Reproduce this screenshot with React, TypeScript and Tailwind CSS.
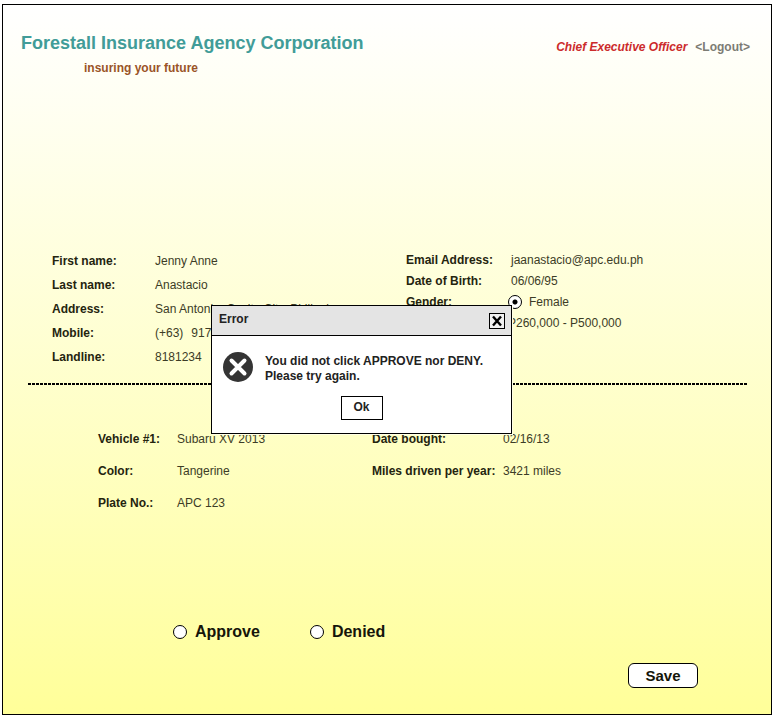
import { useState, type ReactNode } from "react";

function Field({
  label,
  children,
  row,
  labelWidth,
}: {
  label: string;
  children: ReactNode;
  row: string;
  labelWidth: string;
}) {
  return (
    <div className={`flex items-center ${row}`}>
      <dt className={`shrink-0 whitespace-nowrap font-bold text-[#24240f] ${labelWidth}`}>{label}</dt>
      <dd className="whitespace-nowrap text-[#3c3c26]">{children}</dd>
    </div>
  );
}

function Radio({
  id,
  name,
  checked,
  onChange,
}: {
  id: string;
  name: string;
  checked: boolean;
  onChange: () => void;
}) {
  return (
    <input
      id={id}
      type="radio"
      name={name}
      checked={checked}
      onChange={onChange}
      className="size-3.5 shrink-0 appearance-none rounded-full border border-black bg-white checked:bg-[radial-gradient(circle,#000_2px,#fff_3px)]"
    />
  );
}

function ErrorDialog({ onClose }: { onClose: () => void }) {
  return (
    <div
      role="alertdialog"
      aria-labelledby="dialog-title"
      aria-describedby="dialog-message"
      className="absolute top-[300px] left-[208px] w-[301px] border border-black bg-white font-bold text-[#222] shadow-[1px_1px_0_#ffffe6]"
    >
      <div className="flex h-[30px] items-center justify-between border-b border-black bg-[#e4e4e4] pr-1.5 pl-[7px]">
        <h2 id="dialog-title" className="pb-1">
          Error
        </h2>
        <button
          type="button"
          aria-label="Close"
          onClick={onClose}
          className="flex size-4 items-center justify-center border border-black bg-[#f1f1f1]"
        >
          <svg viewBox="0 0 12 12" className="size-3" fill="none" stroke="#000" strokeWidth="2.4">
            <path d="M2 1.5 10 10.5M10 1.5 2 10.5" />
          </svg>
        </button>
      </div>
      <div className="flex gap-[11px] px-[10px] pt-[15px]">
        <svg viewBox="0 0 32 32" className="size-8 shrink-0">
          <circle cx="16" cy="16" r="15" fill="#343434" />
          <path
            d="M9.5 9.5 22.5 22.5M22.5 9.5 9.5 22.5"
            stroke="#fff"
            strokeWidth="4"
            strokeLinecap="round"
          />
        </svg>
        <p id="dialog-message" className="whitespace-nowrap pt-[3px] leading-[15px]">
          You did not click APPROVE nor DENY.
          <br />
          Please try again.
        </p>
      </div>
      <div className="flex justify-center pt-3 pb-[13px]">
        <button type="button" onClick={onClose} className="h-6 w-[42px] border border-black bg-white pb-0.5">
          Ok
        </button>
      </div>
    </div>
  );
}

export default function App() {
  const [open, setOpen] = useState(true);
  const [decision, setDecision] = useState("");
  const personRow = "h-6";
  const contactRow = "h-[21px]";
  const vehicleRow = "h-8";

  return (
    <div className="bg-white pt-1 pr-[6px] pb-[10px] pl-0.5 font-['Liberation_Sans',Arial,sans-serif] text-[12px] leading-4">
      <main className="relative border border-black bg-linear-to-b from-white to-[#ffff99] pb-[26px]">
        <header className="flex items-start justify-between pt-[27px] pr-[21px] pl-[18px]">
          <div>
            <h1 className="text-[18px] leading-[22px] font-bold text-[#419c98]">
              Forestall Insurance Agency Corporation
            </h1>
            <p className="pt-1.5 pl-[63px] font-bold text-[#9a5427]">insuring your future</p>
          </div>
          <div className="flex gap-2 pt-[7px] font-bold">
            <span className="text-[#cc2b2b] italic">Chief Executive Officer</span>
            <a href="#logout" className="text-[#7c7c74]">
              &lt;Logout&gt;
            </a>
          </div>
        </header>

        <section className="grid grid-cols-2 pt-[173px] pr-[11px] pl-[49px]">
          <dl>
            <Field label="First name:" row={personRow} labelWidth="w-[103px]">Jenny Anne</Field>
            <Field label="Last name:" row={personRow} labelWidth="w-[103px]">Anastacio</Field>
            <Field label="Address:" row={personRow} labelWidth="w-[103px]">
              San Antonio, Cavite City, Philippines
            </Field>
            <Field label="Mobile:" row={personRow} labelWidth="w-[103px]">
              <span className="pr-2">(+63)</span>917
            </Field>
            <Field label="Landline:" row={personRow} labelWidth="w-[103px]">8181234</Field>
          </dl>
          <dl>
            <Field label="Email Address:" row={contactRow} labelWidth="w-[105px]">
              jaanastacio@apc.edu.ph
            </Field>
            <Field label="Date of Birth:" row={contactRow} labelWidth="w-[105px]">06/06/95</Field>
            <Field label="Gender:" row={contactRow} labelWidth="w-[102px]">
              <span className="flex items-center gap-[7px]">
                <Radio id="female" name="gender" checked onChange={() => {}} />
                <label htmlFor="female">Female</label>
              </span>
            </Field>
            <Field label="Income:" row={contactRow} labelWidth="w-[102px]">
              P260,000 - P500,000
            </Field>
          </dl>
        </section>

        <hr className="mt-[14px] mr-6 ml-[25px] h-0.5 border-0 bg-[repeating-linear-gradient(to_right,#000_0_3px,transparent_3px_4px)]" />

        <section className="grid grid-cols-2 pt-[38px] pr-[125px] pl-[95px]">
          <dl>
            <Field label="Vehicle #1:" row={vehicleRow} labelWidth="w-[79px]">Subaru XV 2013</Field>
            <Field label="Color:" row={vehicleRow} labelWidth="w-[79px]">Tangerine</Field>
            <Field label="Plate No.:" row={vehicleRow} labelWidth="w-[79px]">APC 123</Field>
          </dl>
          <dl>
            <Field label="Date bought:" row={vehicleRow} labelWidth="w-[131px]">02/16/13</Field>
            <Field label="Miles driven per year:" row={vehicleRow} labelWidth="w-[131px]">3421 miles</Field>
          </dl>
        </section>

        <form onSubmit={(e) => e.preventDefault()} className="font-bold text-[#15150a]">
          <div className="flex gap-[50px] pt-[103px] pl-[170px] text-[16px] leading-5">
            <span className="flex items-center gap-2">
              <Radio
                id="approve"
                name="decision"
                checked={decision === "approve"}
                onChange={() => setDecision("approve")}
              />
              <label htmlFor="approve">Approve</label>
            </span>
            <span className="flex items-center gap-2">
              <Radio
                id="denied"
                name="decision"
                checked={decision === "denied"}
                onChange={() => setDecision("denied")}
              />
              <label htmlFor="denied">Denied</label>
            </span>
          </div>
          <div className="flex justify-end pt-[21px] pr-[73px]">
            <button
              type="submit"
              className="h-[25px] w-[70px] rounded-md border border-black bg-white text-[15px] leading-5"
            >
              Save
            </button>
          </div>
        </form>

        {open && <ErrorDialog onClose={() => setOpen(false)} />}
      </main>
    </div>
  );
}
